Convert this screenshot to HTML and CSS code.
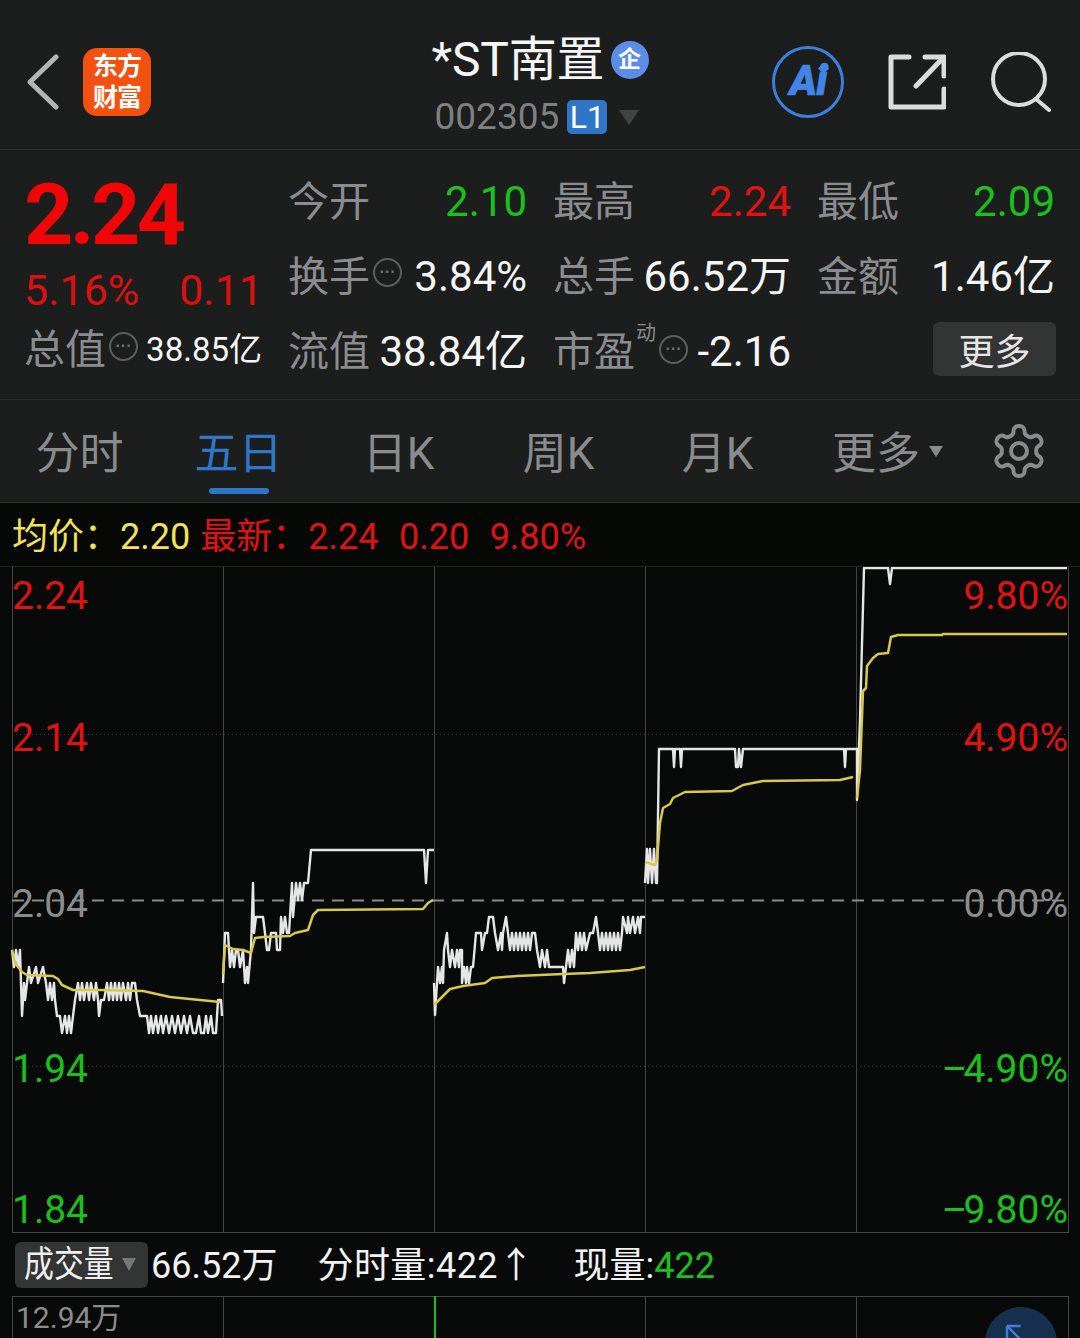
FILE: index.html
```html
<!DOCTYPE html>
<html lang="zh">
<head>
<meta charset="utf-8">
<title>*ST南置</title>
<link rel="stylesheet" href="styles.css">
</head>
<body>
<div class="page">
  <header class="top">
    <div class="top-left">
      <svg class="back" viewBox="0 0 34 56"><path d="M30 3 4 28l26 25" /></svg>
      <div class="logo"><span>东方</span><span>财富</span></div>
    </div>
    <div class="top-center">
      <div class="title"><span>*ST南置</span><i class="qi">企</i></div>
      <div class="sub"><span>002305</span><b class="l1">L1</b><em class="tri"></em></div>
    </div>
    <div class="top-right">
      <div class="ai"><span>Ai</span><svg class="spark" viewBox="0 0 12 12"><path d="M6 0 12 6 6 12 0 6z"/></svg></div>
      <svg class="share" viewBox="0 0 58 56"><path d="M21 3H3v50h53V35M56 22V3H37M56 3 28 32"/></svg>
      <svg class="search" viewBox="0 0 60 60"><circle cx="28" cy="27" r="26"/><path d="M45 47 58 58"/></svg>
    </div>
  </header>

  <section class="quote">
    <div class="q-left">
      <div class="price">2.24</div>
      <div class="change"><span>5.16%</span><span>0.11</span></div>
      <div class="cell small"><span class="lb">总值<i class="dots">···</i></span><span class="v">38.85亿</span></div>
    </div>
    <div class="q-grid">
      <div class="cell"><span class="lb">今开</span><span class="g">2.10</span></div>
      <div class="cell"><span class="lb">最高</span><span class="r">2.24</span></div>
      <div class="cell"><span class="lb">最低</span><span class="g">2.09</span></div>
      <div class="cell"><span class="lb">换手<i class="dots">···</i></span><span class="v">3.84%</span></div>
      <div class="cell"><span class="lb">总手</span><span class="v">66.52万</span></div>
      <div class="cell"><span class="lb">金额</span><span class="v">1.46亿</span></div>
      <div class="cell"><span class="lb">流值</span><span class="v">38.84亿</span></div>
      <div class="cell"><span class="lb">市盈<sup class="dong">动</sup><i class="dots">···</i></span><span class="v">-2.16</span></div>
      <div class="cell"><span></span><button class="more">更多</button></div>
    </div>
  </section>

  <nav class="tabs">
    <span class="tab">分时</span>
    <span class="tab active">五日</span>
    <span class="tab">日K</span>
    <span class="tab">周K</span>
    <span class="tab">月K</span>
    <span class="tab drop">更多<em class="tri-s"></em></span>
    <svg class="gear" viewBox="0 0 24 24"><path d="M12.22 2h-.44a2 2 0 0 0-2 2v.18a2 2 0 0 1-1 1.73l-.43.25a2 2 0 0 1-2 0l-.15-.08a2 2 0 0 0-2.73.73l-.22.38a2 2 0 0 0 .73 2.73l.15.1a2 2 0 0 1 1 1.72v.51a2 2 0 0 1-1 1.74l-.15.09a2 2 0 0 0-.73 2.73l.22.38a2 2 0 0 0 2.73.73l.15-.08a2 2 0 0 1 2 0l.43.25a2 2 0 0 1 1 1.73V20a2 2 0 0 0 2 2h.44a2 2 0 0 0 2-2v-.18a2 2 0 0 1 1-1.73l.43-.25a2 2 0 0 1 2 0l.15.08a2 2 0 0 0 2.73-.73l.22-.39a2 2 0 0 0-.73-2.73l-.15-.08a2 2 0 0 1-1-1.74v-.5a2 2 0 0 1 1-1.74l.15-.09a2 2 0 0 0 .73-2.73l-.22-.38a2 2 0 0 0-2.73-.73l-.15.08a2 2 0 0 1-2 0l-.43-.25a2 2 0 0 1-1-1.73V4a2 2 0 0 0-2-2z"/><circle cx="12" cy="12" r="3.2"/></svg>
  </nav>

  <div class="infobar">
    <span class="y">均价：</span><span class="y mr1">2.20</span><span class="r">最新：</span><span class="r mr2">2.24</span><span class="r mr2">0.20</span><span class="r">9.80%</span>
  </div>

  <div class="chart">
    <svg class="plot" viewBox="0 567 1080 666">
      <g class="grid">
        <path d="M12.5 567V1232M223.5 567V1232M434.5 567V1232M645.5 567V1232M856.5 567V1232M1068.5 567V1232"/>
        <path d="M12 1232.5H1069"/>
      </g>
      <path class="dot" d="M12 734.5H1068M12 1066.5H1068"/>
      <path class="dash" d="M12 900.5H1068"/>
      <g class="white">
        <polyline points="12,950 14,967 16,950 18,967 20,950 22,1016 24,983 25,1000 27,983 29,967 31,983 36,967 38,983 43,967 46,983 48,1000 50,983 52,1000 54,983 55,1000 57,1016 60,1016 62,1033 65,1016 67,1033 69,1016 71,1033 73,1016 75,1000 78,983 80,1000 82,983 84,1000 87,983 89,1000 91,983 94,1000 96,983 98,1000 99,1016 101,1000 104,1000 107,983 109,1000 111,983 113,1000 115,983 117,1000 119,983 121,1000 123,983 126,1000 128,983 130,1000 132,983 135,983 137,1000 140,1016 145,1016 147,1016 149,1033 151,1016 153,1033 156,1016 158,1033 161,1016 163,1033 166,1016 169,1033 172,1016 175,1033 178,1016 181,1033 184,1016 187,1033 190,1016 193,1033 196,1033 199,1016 201,1033 204,1033 206,1016 208,1033 211,1016 213,1033 216,1033 218,1000 221,1000 222,1016"/>
        <polyline points="223,983 225,933 228,933 230,967 232,950 234,967 236,950 238,950 240,967 243,950 245,983 247,967 248,983 251,950 253,883 254,933 256,917 263,917 265,933 267,950 269,950 271,933 276,933 277,950 280,950 281,917 283,933 285,917 287,933 289,933 292,883 293,917 296,883 298,900 300,883 302,900 304,883 308,883 311,850 424,850 426,883 428,850 434,850"/>
        <polyline points="434,983 435,1015 437,983 438,967 440,983 442,967 443,983 444,950 447,933 448,950 450,967 452,950 455,967 457,950 459,967 460,950 462,950 462,983 464,967 466,983 467,967 469,983 471,967 473,967 476,933 481,933 482,950 485,933 487,933 489,917 493,917 495,933 498,950 501,933 502,950 503,933 506,917 508,933 510,950 512,933 514,950 516,933 518,950 520,933 522,950 524,933 526,950 528,933 530,950 532,933 535,933 537,950 540,967 542,950 545,967 547,950 549,967 563,967 564,983 566,967 568,950 570,967 572,950 574,967 576,933 578,950 580,933 582,950 584,933 586,950 590,933 593,933 596,917 598,933 600,950 602,933 604,950 606,933 608,950 610,933 612,950 614,933 616,950 618,933 620,950 622,933 623,917 627,933 628,917 630,933 633,917 635,933 638,917 640,933 641,917 645,917"/>
        <polyline points="645,883 647,849 648,883 650,849 652,883 654,849 656,883 657,883 659,749 673,749 674,767 675,749 680,749 681,767 682,749 735,749 736,767 738,767 739,749 741,767 743,749 844,749 845,767 846,749 857,749 857,800 860,720 864,568 888,568 890,584 892,568 1067,568"/>
      </g>
      <g class="yellow">
        <polyline points="12,950 15,963 22,972 27,975 53,976 58,979 62,985 73,990 100,990 143,991 170,997 220,1002"/>
        <polyline points="223,974 225,945 233,949 243,950 251,953 255,938 263,937 290,936 295,933 308,930 313,915 318,910 423,909 428,903 433,900"/>
        <polyline points="434,1005 450,989 463,986 485,983 492,978 517,976 563,974 590,973 630,970 645,967"/>
        <polyline points="645,862 655,865 657,860 660,823 663,808 670,804 673,798 685,792 732,791 743,785 763,781 840,780 853,777"/>
        <polyline points="857,798 860,770 863,691 866,688 867,666 873,658 878,654 888,653 891,637 898,635 942,635 943,634 1067,634"/>
      </g>
    </svg>
    <span class="ax l r" style="top:7px">2.24</span>
    <span class="ax l r" style="top:149px">2.14</span>
    <span class="ax l n" style="top:315px">2.04</span>
    <span class="ax l g" style="top:480px">1.94</span>
    <span class="ax l g" style="top:621px">1.84</span>
    <span class="ax e r" style="top:7px">9.80%</span>
    <span class="ax e r" style="top:149px">4.90%</span>
    <span class="ax e n" style="top:315px">0.00%</span>
    <span class="ax e g" style="top:480px"><i class="neg">–</i>4.90%</span>
    <span class="ax e g" style="top:621px"><i class="neg">–</i>9.80%</span>
  </div>

  <div class="volbar">
    <div class="chip"><span class="chip-text">成交量</span><em class="tri-c"></em></div>
    <span class="vv gap1">66.52万</span>
    <span class="vv gap2 wide">分时量:422↑</span>
    <span class="vv">现量:<span class="g">422</span></span>
  </div>

  <div class="volpane">
    <svg class="plot" viewBox="0 1296 1080 42">
      <g class="grid">
        <path d="M12 1296.5H1069M12.5 1296V1338M223.5 1296V1338M645.5 1296V1338M856.5 1296V1338M1068.5 1296V1338"/>
      </g>
      <path class="bar" d="M435 1296V1338"/>
    </svg>
    <span class="maxvol">12.94万</span>
    <div class="fab"><svg viewBox="0 0 30 30"><path d="M5 5 26 26M5 5V22M5 5H22"/></svg></div>
  </div>
</div>
</body>
</html>
```
FILE: styles.css
```css
* { box-sizing: border-box; margin: 0; padding: 0; }
html, body { width: 1080px; height: 1338px; overflow: hidden; background: #1b1e1c; }
body { font-family: Roboto, "Noto Sans CJK SC", sans-serif; color: #f2f2f2; }
.page { width: 1080px; height: 1338px; overflow: hidden; display: flex; flex-direction: column; }
i, em { font-style: normal; }

.r { color: #e01212; }
.g { color: #1cc01c; }
.y { color: #f3e255; }
.v { color: #f5f5f5; }
.n { color: #8c8c8c; }

/* header */
.top { height: 150px; flex: none; border-bottom: 1px solid #2d2f2e; display: grid; grid-template-columns: 1fr 217px 1fr; column-gap: 0; }
.top-left { display: flex; align-items: center; padding: 14px 0 0 26px; gap: 23px; }
.back { width: 34px; height: 56px; fill: none; stroke: #b5b5b5; stroke-width: 5; stroke-linecap: round; stroke-linejoin: round; }
.logo { width: 68px; height: 68px; border-radius: 14px; background: #f4500f; color: #fff; font-size: 25px; font-weight: 700; line-height: 31px; display: flex; flex-direction: column; align-items: center; justify-content: center; letter-spacing: -1px; }
.top-center { padding-top: 34px; }
.title { display: flex; align-items: center; justify-content: space-between; font-size: 48px; line-height: 52px; color: #f5f5f5; letter-spacing: -0.2px; }
.qi { width: 38px; height: 38px; border-radius: 50%; background: #5b8de6; color: #fff; font-size: 23px; font-weight: 700; line-height: 38px; text-align: center; letter-spacing: 0; }
.sub { display: flex; align-items: center; padding: 10px 0 0 3px; font-size: 37px; line-height: 42px; color: #7e8082; }
.l1 { width: 40px; height: 34px; margin-left: 8px; border-radius: 5px; background: #2f76c6; color: #fff; font-size: 32px; line-height: 34px; font-weight: 400; text-align: center; }
.tri { width: 0; height: 0; margin-left: 12px; border-left: 10px solid transparent; border-right: 10px solid transparent; border-top: 15px solid #424342; }
.top-right { display: flex; align-items: center; justify-content: flex-end; padding: 14px 29px 0 0; }
.ai { width: 72px; height: 72px; border-radius: 50%; border: 3px solid #3f7fdc; color: #4285e6; font-size: 42px; font-weight: 900; font-style: italic; line-height: 64px; text-align: center; position: relative; letter-spacing: -1px; -webkit-text-stroke: 0.6px #4285e6; }
.spark { position: absolute; top: 14px; right: 12px; width: 11px; height: 11px; fill: #4285e6; }
.share { width: 58px; height: 56px; margin-left: 44px; fill: none; stroke: #dcdcdc; stroke-width: 5; stroke-linecap: round; stroke-linejoin: round; }
.search { width: 60px; height: 60px; margin-left: 45px; fill: none; stroke: #dcdcdc; stroke-width: 4; stroke-linecap: round; }

/* quote */
.quote { height: 250px; flex: none; border-bottom: 1px solid #2d2f2e; padding: 14px 0 0 24px; display: flex; gap: 26px; }
.q-left { width: 238px; flex: none; display: flex; flex-direction: column; padding-top: 1px; }
.price { height: 100px; font-size: 86px; font-weight: 700; line-height: 100px; color: #f00606; letter-spacing: -3.6px; }
.change { height: 50px; display: flex; justify-content: space-between; margin-right: -1px; font-size: 43px; line-height: 50px; color: #dc1010; }
.q-grid { flex: none; display: grid; grid-template-columns: 239px 238px 238px; grid-auto-rows: 75px; column-gap: 26px; align-content: start; }
.cell { display: flex; justify-content: space-between; align-items: center; font-size: 42px; line-height: 50px; white-space: nowrap; }
.cell > span { height: 50px; }
.cell.small { height: 70px; font-size: 33px; }
.lb { display: flex; align-items: center; font-size: 41px; line-height: 50px; color: #8b8c8f; }
.dots { width: 29px; height: 29px; margin: -8px 0 0 3px; border: 2px solid #5d5e5e; border-radius: 50%; font-size: 16px; line-height: 24px; text-align: center; color: #6f7070; font-family: "Liberation Sans", sans-serif; font-weight: 700; }
.dong { font-size: 20px; line-height: 20px; margin: -38px 0 0 1px; }
.lb .dong + .dots { margin-left: 3px; margin-top: -4px; }
.more { width: 123px; height: 54px; margin: 0 -1px 5px 0; border: 0; border-radius: 6px; background: #333534; color: #e6e6e6; font: 36px/54px "Noto Sans CJK SC", sans-serif; }

/* tabs */
.tabs { height: 103px; flex: none; border-bottom: 1px solid #2d2f2e; display: grid; grid-template-columns: 159px 159px 161px 159px 159px 158px 1fr; align-items: center; }
.tab { position: relative; height: 102px; font-size: 44px; line-height: 108px; color: #8a8b8d; text-align: center; }
.tab.active { color: #2f76c8; }
.tab.active::after { content: ""; position: absolute; left: 50%; bottom: 8px; width: 60px; height: 6px; margin-left: -30px; border-radius: 3px; background: #2f76c8; }
.tab.drop { padding-left: 35px; display: flex; align-items: flex-start; gap: 9px; }
.tri-s { width: 0; height: 0; margin-top: 46px; border-left: 7px solid transparent; border-right: 7px solid transparent; border-top: 11px solid #8a8b8d; }
.gear { width: 60px; height: 60px; margin-left: 34px; fill: none; stroke: #8a8b8d; stroke-width: 1.6; stroke-linejoin: round; }

/* info bar */
.infobar { height: 63px; flex: none; background: #060806; padding: 5px 0 0 12px; display: flex; align-items: center; font-size: 36px; line-height: 56px; white-space: nowrap; }
.mr1 { margin-right: 10px; }
.mr2 { margin-right: 20.5px; }

/* chart */
.chart { position: relative; height: 667px; flex: none; background: #070a08; border-top: 1px solid #232524; }
.plot { display: block; width: 1080px; height: 100%; fill: none; }
.grid path { stroke: #444645; stroke-width: 1; }
.dot { stroke: #3d3f3e; stroke-width: 1; stroke-dasharray: 1 3; }
.dash { stroke: #8c8c8c; stroke-width: 2; stroke-dasharray: 12 8; }
.white polyline { stroke: #e6e6e6; stroke-width: 2.4; stroke-linejoin: round; fill: none; }
.yellow polyline { stroke: #d8c84c; stroke-width: 2.5; stroke-linejoin: round; fill: none; }
.ax { position: absolute; font-size: 39px; line-height: 44px; }
.ax.l { left: 12px; }
.ax.e { right: 12px; }
.neg { letter-spacing: -4px; }

/* volume */
.volbar { height: 63px; flex: none; background: #070a08; display: flex; align-items: center; padding: 0 0 0 15px; font-size: 36px; white-space: nowrap; }
.vv { line-height: 46px; padding-top: 3px; }
.chip { width: 133px; height: 46px; margin-right: 3px; padding-left: 9px; border-radius: 6px; background: #333534; color: #f0f0f0; line-height: 46px; display: flex; align-items: center; }
.chip-text { width: 90px; flex: none; transform: scaleX(0.83); transform-origin: left center; }
.tri-c { width: 0; height: 0; margin-left: 8px; border-left: 7px solid transparent; border-right: 7px solid transparent; border-top: 13px solid #777; }
.gap1 { margin-right: 40px; }
.gap2 { margin-right: 39px; }
.wide { letter-spacing: 0.45px; }

.volpane { position: relative; flex: 1; background: #070a08; }
.bar { stroke: #1cc01c; stroke-width: 2; }
.maxvol { position: absolute; left: 16px; top: 2px; font-size: 30px; line-height: 40px; color: #8c8c8c; }
.fab { position: absolute; left: 985px; top: 11px; width: 72px; height: 72px; border-radius: 50%; background: #16304f; }
.fab svg { position: absolute; left: 18px; top: 15px; width: 24px; height: 24px; fill: none; stroke: #3f7fdc; stroke-width: 3; }
```
